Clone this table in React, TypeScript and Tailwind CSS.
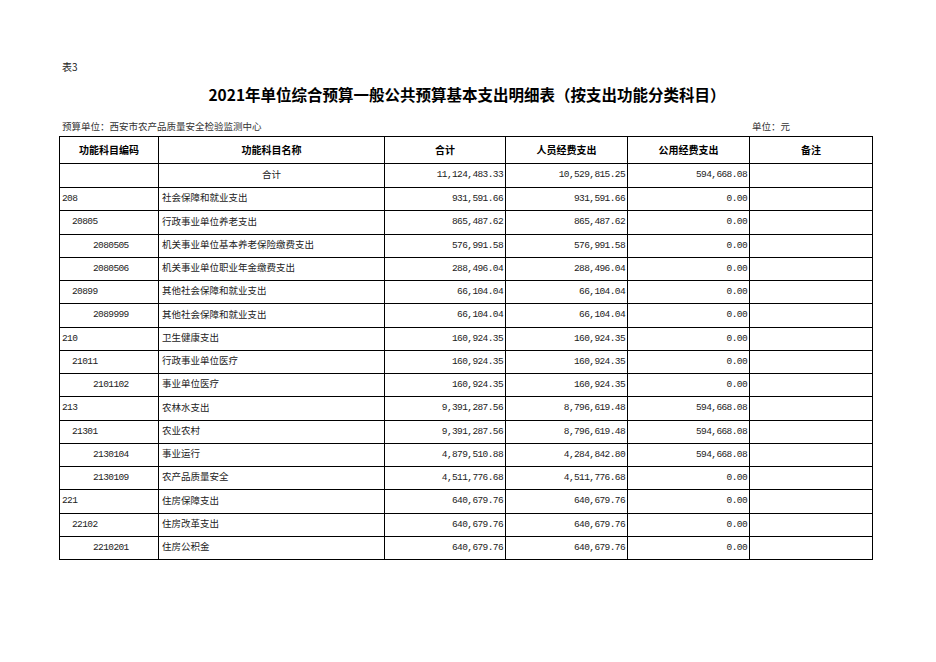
const cjk = "font-['Noto_Sans_CJK_SC',sans-serif]";
const mono = "font-['Liberation_Mono','Noto_Sans_CJK_SC',monospace] text-[9.5px] tracking-[-0.6px]";

type Row = {
  code: string;
  level: 0 | 1 | 2;
  name: string;
  total: string;
  staff: string;
  public: string;
};

const rows: Row[] = [
  { code: "208", level: 0, name: "社会保障和就业支出", total: "931,591.66", staff: "931,591.66", public: "0.00" },
  { code: "20805", level: 1, name: "行政事业单位养老支出", total: "865,487.62", staff: "865,487.62", public: "0.00" },
  { code: "2080505", level: 2, name: "机关事业单位基本养老保险缴费支出", total: "576,991.58", staff: "576,991.58", public: "0.00" },
  { code: "2080506", level: 2, name: "机关事业单位职业年金缴费支出", total: "288,496.04", staff: "288,496.04", public: "0.00" },
  { code: "20899", level: 1, name: "其他社会保障和就业支出", total: "66,104.04", staff: "66,104.04", public: "0.00" },
  { code: "2089999", level: 2, name: "其他社会保障和就业支出", total: "66,104.04", staff: "66,104.04", public: "0.00" },
  { code: "210", level: 0, name: "卫生健康支出", total: "160,924.35", staff: "160,924.35", public: "0.00" },
  { code: "21011", level: 1, name: "行政事业单位医疗", total: "160,924.35", staff: "160,924.35", public: "0.00" },
  { code: "2101102", level: 2, name: "事业单位医疗", total: "160,924.35", staff: "160,924.35", public: "0.00" },
  { code: "213", level: 0, name: "农林水支出", total: "9,391,287.56", staff: "8,796,619.48", public: "594,668.08" },
  { code: "21301", level: 1, name: "农业农村", total: "9,391,287.56", staff: "8,796,619.48", public: "594,668.08" },
  { code: "2130104", level: 2, name: "事业运行", total: "4,879,510.88", staff: "4,284,842.80", public: "594,668.08" },
  { code: "2130109", level: 2, name: "农产品质量安全", total: "4,511,776.68", staff: "4,511,776.68", public: "0.00" },
  { code: "221", level: 0, name: "住房保障支出", total: "640,679.76", staff: "640,679.76", public: "0.00" },
  { code: "22102", level: 1, name: "住房改革支出", total: "640,679.76", staff: "640,679.76", public: "0.00" },
  { code: "2210201", level: 2, name: "住房公积金", total: "640,679.76", staff: "640,679.76", public: "0.00" },
];

const indent = ["pl-[2px]", "pl-[12px]", "pl-[33px]"];

const headers = ["功能科目编码", "功能科目名称", "合计", "人员经费支出", "公用经费支出", "备注"];

export default function App() {
  return (
    <div className={`w-[936px] h-[662px] bg-white text-black ${cjk}`}>
      <div className="pl-[59px] pt-[60px] w-[872px]">
        {/* Sheet label */}
        <p className="text-[10px] leading-[14px] pl-[3px] text-[#222]">表3</p>

        {/* Title */}
        <h1 className="mt-[10px] text-center text-[15.5px] leading-[20px] font-bold pl-[3px]">
          2021年单位综合预算一般公共预算基本支出明细表（按支出功能分类科目）
        </h1>

        {/* Unit line */}
        <div className="mt-[15px] flex justify-between text-[9.5px] leading-[14px] text-[#333]">
          <span className="pl-[3px]">预算单位：西安市农产品质量安全检验监测中心</span>
          <span className="pr-[82px]">单位：元</span>
        </div>

        {/* Table */}
        <table className="mt-[3px] w-[813px] table-fixed border-collapse">
          <colgroup>
            <col className="w-[99px]" />
            <col className="w-[226px]" />
            <col className="w-[121px]" />
            <col className="w-[122px]" />
            <col className="w-[122px]" />
            <col className="w-[123px]" />
          </colgroup>
          <thead>
            <tr className="h-[27px]">
              {headers.map((h) => (
                <th
                  key={h}
                  className="border border-black text-center text-[10px] font-bold leading-none p-0 pb-[1px]"
                >
                  {h}
                </th>
              ))}
            </tr>
          </thead>
          <tbody className="text-[#222]">
            <tr className="h-[24px]">
              <td className="border border-black p-0"></td>
              <td className="border border-black p-0 pb-[2px] text-center text-[9.5px] leading-none">合计</td>
              <td className={`border border-black p-0 pr-[2px] text-right ${mono}`}>11,124,483.33</td>
              <td className={`border border-black p-0 pr-[2px] text-right ${mono}`}>10,529,815.25</td>
              <td className={`border border-black p-0 pr-[2px] text-right ${mono}`}>594,668.08</td>
              <td className="border border-black p-0"></td>
            </tr>
            {rows.map((r) => (
              <tr key={r.code} className="h-[23.25px]">
                <td className={`border border-black p-0 ${indent[r.level]} ${mono}`}>{r.code}</td>
                <td className="border border-black p-0 pl-[3px] pb-[2px] text-[9.5px] leading-none whitespace-nowrap">{r.name}</td>
                <td className={`border border-black p-0 pr-[2px] text-right ${mono}`}>{r.total}</td>
                <td className={`border border-black p-0 pr-[2px] text-right ${mono}`}>{r.staff}</td>
                <td className={`border border-black p-0 pr-[2px] text-right ${mono}`}>{r.public}</td>
                <td className="border border-black p-0"></td>
              </tr>
            ))}
          </tbody>
        </table>
      </div>
    </div>
  );
}
